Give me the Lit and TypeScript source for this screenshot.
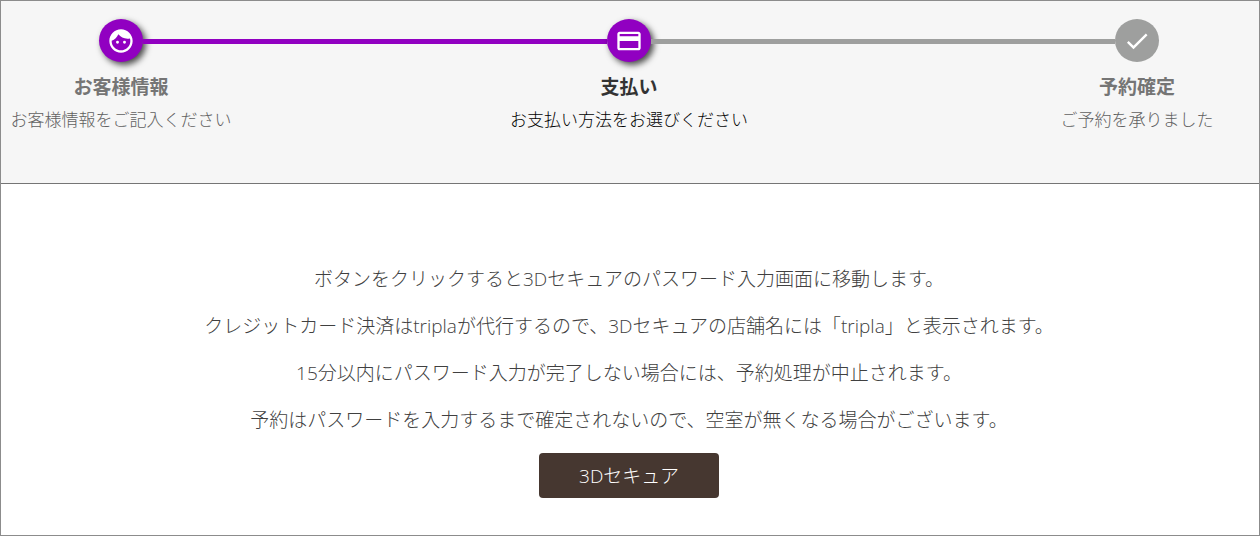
import { LitElement, html, css, svg } from "lit";
import { customElement } from "lit/decorators.js";
import { classMap } from "lit/directives/class-map.js";

type StepState = "done" | "current" | "todo";

interface Step {
  title: string;
  note: string;
  state: StepState;
  icon: unknown;
}

const faceIcon = svg`<path d="M10.25 13a1.25 1.25 0 1 1-2.5 0 1.25 1.25 0 0 1 2.5 0zM15 11.75a1.25 1.25 0 1 0 0 2.5 1.25 1.25 0 0 0 0-2.5zM22 12c0 5.52-4.48 10-10 10S2 17.520 2 12 6.480 2 12 2s10 4.480 10 10zm-2 0c0-.78-.12-1.530-.330-2.240-.7.150-1.420.240-2.170.240-3.130 0-5.920-1.440-7.760-3.690C8.690 8.870 6.600 10.880 4 11.860c.010.040 0 .090 0 .140 0 4.410 3.590 8 8 8s8-3.590 8-8z"/>`;
const cardIcon = svg`<path d="M20 4H4c-1.110 0-1.990.890-1.990 2L2 18c0 1.110.890 2 2 2h16c1.110 0 2-.890 2-2V6c0-1.110-.890-2-2-2zm0 14H4v-6h16v6zm0-10H4V6h16v2z"/>`;
const checkIcon = svg`<path d="M9 16.170 4.830 12l-1.420 1.410L9 19 21 7l-1.410-1.410z"/>`;

const steps: Step[] = [
  { title: "お客様情報", note: "お客様情報をご記入ください", state: "done", icon: faceIcon },
  { title: "支払い", note: "お支払い方法をお選びください", state: "current", icon: cardIcon },
  { title: "予約確定", note: "ご予約を承りました", state: "todo", icon: checkIcon },
];

const messages = [
  "ボタンをクリックすると3Dセキュアのパスワード入力画面に移動します。",
  "クレジットカード決済はtriplaが代行するので、3Dセキュアの店舗名には「tripla」と表示されます。",
  "15分以内にパスワード入力が完了しない場合には、予約処理が中止されます。",
  "予約はパスワードを入力するまで確定されないので、空室が無くなる場合がございます。",
];

@customElement("booking-steps")
export class BookingSteps extends LitElement {
  static styles = css`
    :host {
      display: block;
      padding: 18px 12px 50px 10px;
      background: #f6f6f6;
      border-bottom: 1px solid #757575;
    }
    .steps {
      display: flex;
      margin: 0;
      padding: 0;
      list-style: none;
    }
    .step {
      flex: none;
      width: 220px;
      display: flex;
      flex-direction: column;
      align-items: center;
      color: #757575;
      white-space: nowrap;
    }
    .line {
      flex: 1;
      height: 5px;
      margin: 20px -88px 0;
      background: #9e9f9e;
    }
    .line.passed {
      background: #9100c1;
    }
    .badge {
      display: flex;
      align-items: center;
      justify-content: center;
      width: 44px;
      height: 43px;
      border-radius: 50%;
      background: #9e9f9e;
    }
    .badge.active {
      background: #9100c1;
      box-shadow: 3px 3px 6px rgba(0, 0, 0, 0.7);
    }
    .icon {
      width: 28px;
      height: 28px;
      fill: #fff;
    }
    .title {
      margin: 12px 0 0;
      font-size: 19px;
      line-height: 26px;
      font-weight: 700;
    }
    .note {
      margin: 7px 0 0;
      color: #606060;
      font-size: 17px;
      line-height: 26px;
    }
    .current .title {
      color: #333;
    }
    .current .note {
      color: #000;
    }
  `;

  render() {
    return html`<ol class="steps">
      ${steps.map((step, i) => {
        const reached = step.state !== "todo";
        return html`
          ${i > 0
            ? html`<li class=${classMap({ line: true, passed: reached })} role="presentation"></li>`
            : null}
          <li
            class=${classMap({ step: true, current: step.state === "current" })}
            aria-current=${step.state === "current" ? "step" : "false"}
          >
            <span class=${classMap({ badge: true, active: reached })}>
              <svg class="icon" viewBox="0 0 24 24" aria-hidden="true">${step.icon}</svg>
            </span>
            <h2 class="title">${step.title}</h2>
            <p class="note">${step.note}</p>
          </li>
        `;
      })}
    </ol>`;
  }
}

@customElement("app-root")
export class AppRoot extends LitElement {
  static styles = css`
    :host {
      display: block;
      box-sizing: border-box;
      min-height: 100vh;
      border: 1px solid #8c8c8c;
      background: #fff;
      font-family: "Open Sans", "Noto Sans CJK JP", sans-serif;
      font-weight: 300;
    }
    .content {
      display: flex;
      flex-direction: column;
      align-items: center;
      padding: 81px 18px 36px 16px;
      color: #404040;
      text-align: center;
      font-size: 19px;
    }
    .message {
      margin: 0 0 19px;
      line-height: 28px;
    }
    .secure {
      width: 180px;
      height: 45px;
      padding: 0 0 2px;
      border: 0;
      border-radius: 4px;
      background: #463730;
      color: #fff;
      font: inherit;
      cursor: pointer;
    }
  `;

  render() {
    return html`
      <booking-steps></booking-steps>
      <main class="content">
        ${messages.map((text) => html`<p class="message">${text}</p>`)}
        <button class="secure" type="button">3Dセキュア</button>
      </main>
    `;
  }
}
